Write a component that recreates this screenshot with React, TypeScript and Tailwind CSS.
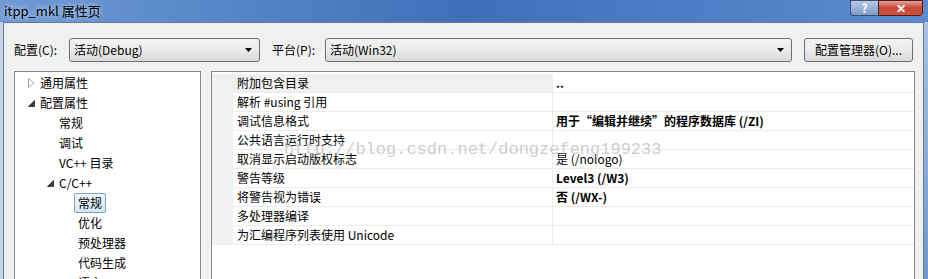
import React from "react";

const font = { fontFamily: '"Noto Sans CJK SC", "Noto Sans", sans-serif' };

const treeItems = [
  { label: "通用属性", indent: 40, arrow: "closed" },
  { label: "配置属性", indent: 40, arrow: "open" },
  { label: "常规", indent: 59 },
  { label: "调试", indent: 59 },
  { label: "VC++ 目录", indent: 59 },
  { label: "C/C++", indent: 59, arrow: "open" },
  { label: "常规", indent: 78, selected: true },
  { label: "优化", indent: 78 },
  { label: "预处理器", indent: 78 },
  { label: "代码生成", indent: 78 },
  { label: "语言", indent: 78 },
];

const props = [
  { name: "附加包含目录", value: "..", bold: true },
  { name: "解析 #using 引用", value: "" },
  { name: "调试信息格式", value: "用于“编辑并继续”的程序数据库 (/ZI)", bold: true },
  { name: "公共语言运行时支持", value: "" },
  { name: "取消显示启动版权标志", value: "是 (/nologo)" },
  { name: "警告等级", value: "Level3 (/W3)", bold: true },
  { name: "将警告视为错误", value: "否 (/WX-)", bold: true },
  { name: "多处理器编译", value: "" },
  { name: "为汇编程序列表使用 Unicode", value: "" },
];

const Arrow = ({ kind }: { kind: string }) =>
  kind === "closed" ? (
    <svg width="7" height="10" viewBox="0 0 7 10" className="shrink-0">
      <path d="M0.5 0.5 L6 5 L0.5 9.5 Z" fill="white" stroke="#a6a6a6" />
    </svg>
  ) : (
    <svg width="7" height="7" viewBox="0 0 7 7" className="shrink-0">
      <path d="M6.5 0.5 L6.5 6.5 L0.5 6.5 Z" fill="#404040" stroke="#404040" />
    </svg>
  );

const Combo = ({ text, width }: { text: string; width: string }) => (
  <div
    className={`${width} h-[24px] flex items-center justify-between rounded-[3px] border border-[#707070] bg-gradient-to-b from-[#f3f3f3] via-[#ebebeb] to-[#d9d9d9] pl-[4px] pr-[7px]`}
  >
    <span>{text}</span>
    <svg width="7" height="4" viewBox="0 0 7 4">
      <path d="M0 0 L7 0 L3.5 4 Z" fill="#000" />
    </svg>
  </div>
);

const App = () => {
  return (
    <div
      className="relative w-[928px] h-[279px] overflow-hidden flex flex-col text-[12px] text-black bg-[#5d8acb]"
      style={font}
    >
      {/* title bar */}
      <div className="h-[22px] shrink-0 flex items-start justify-between bg-gradient-to-r from-[#6f9ad6] via-[#3f6fb8] to-[#5c8bd0]">
        <div className="pl-[4px] pt-[1px] text-[13px] [text-shadow:0_0_6px_rgba(255,255,255,0.9)]">
          itpp_mkl 属性页
        </div>
        <div className="flex mr-[5px]">
          <div className="w-[28px] h-[16px] flex items-center justify-center border border-[#3b4f6e] border-r-0 rounded-bl-[4px] bg-gradient-to-b from-[#b7c9e4] to-[#7f9cc8] text-white font-bold text-[12px] leading-none">
            ?
          </div>
          <div className="w-[45px] h-[16px] flex items-center justify-center border border-[#4a1a16] rounded-br-[4px] bg-gradient-to-b from-[#e0a197] via-[#c8463a] to-[#d24f3c] text-white font-bold text-[12px] leading-none">
            ✕
          </div>
        </div>
      </div>

      {/* body */}
      <div className="flex-1 flex min-h-0">
        <div className="w-[3px] bg-[#c7d5e8]" />
        <div className="flex-1 flex flex-col bg-[#f0f0f0] border-l border-t border-[#6b7a8f] min-h-0">
          {/* toolbar */}
          <div className="flex items-center mt-[15px] h-[24px] pl-[10px]">
            <span className="w-[55px]">配置(C):</span>
            <Combo text="活动(Debug)" width="w-[191px]" />
            <span className="ml-[12px] w-[53px]">平台(P):</span>
            <Combo text="活动(Win32)" width="w-[467px]" />
            <div className="ml-[12px] w-[109px] h-[24px] flex items-center justify-center rounded-[3px] border border-[#707070] bg-gradient-to-b from-[#f3f3f3] via-[#ebebeb] to-[#d9d9d9]">
              配置管理器(O)...
            </div>
          </div>

          {/* panels */}
          <div className="flex mt-[9px] pl-[10px] flex-1 min-h-0">
            <div className="w-[187px] bg-white border border-[#828790] border-b-0 pt-[1px]">
              {treeItems.map((it, i) => (
                <div key={i} className="relative h-[20px] flex items-center">
                  {it.arrow && (
                    <div
                      className={`absolute top-[5px] ${it.label === "C/C++" ? "left-[32px]" : "left-[13px]"} h-[10px] flex items-center`}
                    >
                      <Arrow kind={it.arrow} />
                    </div>
                  )}
                  {it.selected ? (
                    <div className="ml-[59px] h-[20px] px-[3px] flex items-center rounded-[2px] border border-[#7da2ce] bg-gradient-to-b from-[#eef5fd] to-[#d8e8f9]">
                      {it.label}
                    </div>
                  ) : (
                    <span style={{ marginLeft: it.indent - 15 }}>{it.label}</span>
                  )}
                </div>
              ))}
            </div>

            <div className="ml-[10px] w-[704px] bg-white border border-[#828790] border-b-0 pt-[2px]">
              {props.map((p, i) => (
                <div key={i} className="flex h-[19px]">
                  <div className="w-[21px] bg-[#f0f0f0]" />
                  <div
                    className={`w-[320px] border-b border-r border-[#ececec] pl-[4px] flex items-center ${i === 0 ? "bg-[#f0f0f0]" : ""}`}
                  >
                    {p.name}
                  </div>
                  <div
                    className={`flex-1 border-b border-[#ececec] pl-[3px] flex items-center ${p.bold ? "font-bold" : ""}`}
                  >
                    {p.value}
                  </div>
                </div>
              ))}
            </div>
          </div>
        </div>
        <div className="w-[5px] border-l border-[#6b7a8f] bg-gradient-to-b from-[#a9c2e6] to-[#6f97d2]" />
      </div>

      {/* watermark */}
      <div
        className="absolute left-[284px] top-[137px] text-[17px] text-[#bcbcbc]/75 pointer-events-none"
        style={{ fontFamily: '"Liberation Mono", monospace' }}
      >
        http://blog.csdn.net/dongzefeng199233
      </div>
    </div>
  );
};

export default App;
